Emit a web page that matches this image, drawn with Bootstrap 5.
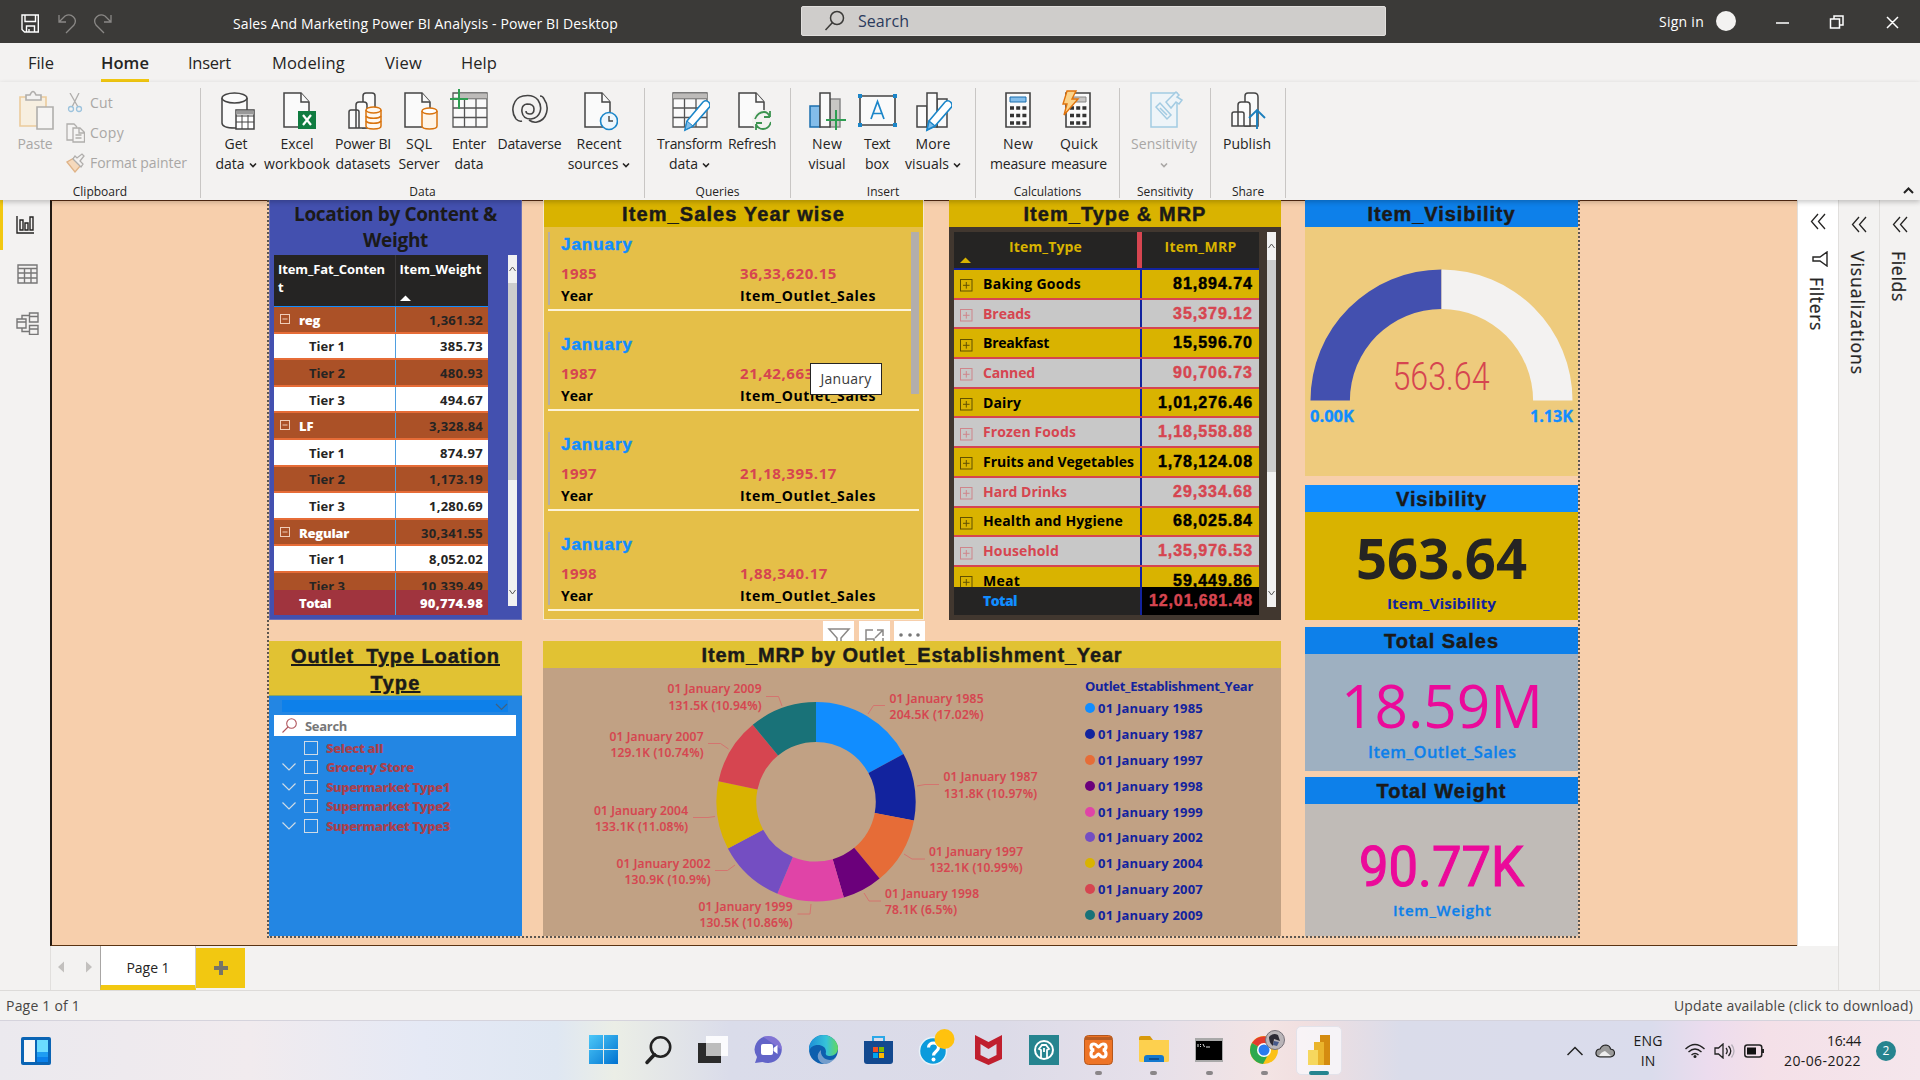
<!DOCTYPE html>
<html lang="en">
<head>
<meta charset="utf-8">
<title>Sales And Marketing Power BI Analysis - Power BI Desktop</title>
<link href="https://cdn.jsdelivr.net/npm/bootstrap@5.3.0/dist/css/bootstrap.min.css" rel="stylesheet">
<style>
html,body{width:1920px;height:1080px;overflow:hidden}
body{font-family:"Open Sans","Noto Sans",sans-serif;font-size:14px;line-height:20px;color:#252423;background:#f3f2f1}
svg{display:block;flex:none}
[data-fit]{display:inline-block;white-space:nowrap}
.arial{font-family:"Liberation Sans",Arial,sans-serif;font-weight:700;-webkit-text-stroke:.45px currentColor}
/* title bar */
.titlebar{height:43px;background:#3b3a38;color:#fff}
.t-left{width:801px;padding:4px 0 0 21px}
.undo{margin-left:19px}
.t-title{margin-left:119px}
.t-search{width:585px;height:30px;margin-top:-1px;background:#cfcdcb;border:1px solid #e0dedc;border-radius:2px;color:#2b3a5c;font-size:16px;padding-left:22px}
.t-right{width:534px;padding-right:21px}
.avatar{width:20px;height:20px;background:#f3f2f1;margin:-1px 40px 0 12px}
/* ribbon */
.tabs{height:39px;font-size:16.5px;padding-left:28px}
.tabs span{height:39px;padding-top:9px;line-height:22px}
.tabs .on{font-weight:600;border-bottom:3px solid #f2c811}
.ribbon{height:118px;padding-top:6px;box-shadow:0 2px 5px rgba(0,0,0,.22);position:relative;z-index:5;background:#f3f2f1}
.grp{height:110px;border-right:1px solid #c8c6c4}
.grp-body{height:93px;padding-left:9px}
.grp-name{height:17px;font-size:12px;line-height:22px;text-align:center}
.rb{flex:none;text-align:center;white-space:nowrap;color:#252423}
.rb svg{margin:0 auto;height:46px}
.rb div{display:block;width:max-content;margin:0 auto;line-height:20px}
.dim,.rb.dim{color:#a9a7a5}
.gc{width:201px}.gd{width:444px}.gq{width:146px}.gi{width:185px}.gm{width:144px}.gs{width:91px}.gp{width:75px}
.w50b{width:50px}.w52b{width:52px}.w54b{width:54px}.w56b{width:56px}.w46b{width:46px}.w62b{width:62px}.w66b{width:66px}.w68b{width:68px}.w70b{width:70px}.w71b{width:71px}
.clip-item{height:30px}
.clip-item svg{margin:0 5px 0 1px}
/* work area */
.workarea{height:790px}
.sidenav{width:50px;height:790px}
.sidenav div{height:49.500px}
.sidenav .on{box-shadow:inset 3px 0 #f2c811}
.canvas-wrap{width:1747px}
.canvas{height:746px;background:#f7cfac;border-left:2px solid #231a12;border-bottom:1px solid #5a3413;border-top:1px solid #5a2d13;padding-left:215px}
.report{width:1313px;height:738px;margin-top:-1px;border:2px dotted #5c5650;border-top:0}
.colA{width:254px}.colM{width:738px;margin-left:21px}.colR{width:273px;margin-left:24px}
.hd{height:27px;font-size:20px;line-height:29px;text-align:center;color:#1b1a19;overflow:hidden;white-space:nowrap;font-weight:700}
.hd-b{background:#0d80ea}.hd-b2{background:#118dff}.hd-y{background:#d9b300}.hd-g{background:#e1c233}
.pane{width:41px;height:790px;border-left:1px solid #e1dfdd}
.vt{writing-mode:vertical-rl;font-size:17.5px;line-height:22px;color:#252423;-webkit-text-stroke:.25px #252423;margin-right:3px}
/* first matrix */
.vA{height:420px;background:#4350af;border:1px solid #6b70b5;border-top:0}
.vA .ttl{height:55px;font-size:19px;line-height:26px;font-weight:700;color:#1b1a19;text-align:center;padding-top:1px}
.m1{width:214px;height:360px;overflow:hidden;margin-left:4px;font-size:13px;font-weight:700}
.m1 .h{height:52px;background:#252423;color:#fff;border-bottom:1px solid #118dff;line-height:18px;padding-top:5px}
.m1 .c1{width:121.5px;border-right:1px solid #4f9fe0;height:100%}
.m1 .h .c1{border-color:#3a3838;margin-top:-5px;padding-top:5px;height:51px}
.m1rows{height:283px;overflow:hidden}
.m1 .r{height:26.6px;background:#fff;border-bottom:2px solid #e66c37}
.m1 .r.o{background:#ab5127}
.m1 .r.g .c1{color:#fff;font-weight:800}
.m1 .r .c1{padding-left:35px}
.m1 .r.g .c1{padding-left:6px}
.m1 .r span{padding-top:1px}
.m1 .c2{width:92.5px;padding-right:5px}
.m1 .tot{height:25px;background:#a0343e;color:#fff;font-weight:800}
.m1 .tot .c1{padding-left:25px}
.sortmark{margin-top:17px}
.sbar{width:9px;background:#f1f1f1}
.sbar i{display:block;background:#cdcdcd}
.sb1{margin-left:20px;height:351px}.sb1 i{height:197px}
.sb2{margin-top:5px;height:375px}.sb2 i{height:212px}
/* slicer */
.slicer{height:295px;background:#2386e3;margin-top:21px}
.slicer .sh{height:55px;background:#e1c233;font-size:20px;line-height:27px;text-align:center;color:#1b1a19;border-bottom:1px solid #8ca75e;padding-top:2px}
.slicer .sh span{text-decoration:underline}
.s-drop{height:12px;background:#0d80ea;margin:4px 14px 3px 13px}
.s-search{height:21px;background:#fff;margin:0 6px 2px 5px;font-size:13px;font-weight:700;color:#777;padding-left:8px}
.s-row{height:19.5px;padding-left:13px;font-size:13px;font-weight:800;color:#a8414f}
.s-row i{width:14px;height:14px;border:1px solid #cfdbe6;margin:0 8px}
/* multi-row card */
.vB{width:381px;height:420px;background:#e5bf48;border:1px solid #f5e9d0;border-top:0;margin-right:25px}
.mcs{width:367px}
.mc{height:100px;margin-left:4px}
.mc-in{height:73px;border-left:2px solid #b3aeab;margin-top:5px;padding:3px 0 0 11px}
.mc .mn{font-size:17px;line-height:20px;color:#118dff}
.mc .vals{font-size:15px;color:#d64550;font-weight:700;line-height:20px;margin-top:8px}
.mc .labs{font-size:14px;color:#000;font-weight:700;line-height:20px;margin-top:3px}
.mc .k{width:179px}
.mc-line{height:2px;background:#fdf3d8;margin:4px -8px 0 0}
.mc:first-child .mc-line{margin-right:0}
.mc + .mc{padding-top:0}
.mc-bar{width:8px;height:162px;background:#b3aeab;margin-top:5px}
.tip{left:810px;top:363px;width:72px;height:32px;background:#fff;border:1px solid #252423;z-index:9;line-height:30px;text-align:center;color:#3a3a3a;font-size:14px}
/* second matrix */
.vC{width:332px;height:420px;background:#41372f}
.m2{width:305px;height:383px;margin:5px 8px 0 5px}
.m2 .h{height:38px;background:#252423;border-bottom:2px solid #12239e;color:#d9b300;font-weight:700;font-size:14px}
.m2 .h span{padding-top:5px}
.m2 .c1{width:188px;border-right:2px solid #12239e}
.m2 .h .c1{border-right:5px solid #d64550;width:188px;height:36px}
.m2rows{height:317px;overflow:hidden}
.m2 .r{height:29.7px;background:#d9b300;border-bottom:2px solid #d64550;color:#000}
.m2 .r.e{background:#c8c8c8;color:#d64550}
.m2 .r .c1{height:100%;padding-left:6px;font-size:14px;font-weight:700}
.m2 .c2{width:117px;padding-right:6px;font-size:16px}
.m2 .h .c2{padding-right:0;font-size:14px}
.m2 .r svg{margin:4px 10px 0 0;opacity:.55}
.m2 .r.e svg{opacity:.5}
.m2 .tri{left:6px;bottom:5px}
.m2 .tot{height:28px;background:#252423;color:#d64550}
.m2 .tot .c1{padding-left:29px;color:#118dff;font-weight:800}
.m2 .tot .c2{background:#000;height:100%}
.acts{right:356px;top:421px;height:20px;gap:4.5px;overflow:hidden}
.acts span{width:31px;height:32px;background:#fff}
.acts svg{margin-top:-1px}
/* donut */
.vD{height:295px;background:#c1a184;margin-top:21px}
.legend-l{padding-top:9px;font-size:13px;font-weight:700;color:#12239e}
.legend-l .lt{height:18px;line-height:18px}
.legend-l .li{height:25.9px}
.legend-l .li i{width:10px;height:10px;border-radius:50%;margin:0 3px 0 0;flex:none}
/* status + taskbar */
.pages{height:44px;border-left:1px solid #e1dfdd}
.ptab{width:96px;height:44px;background:#fff;border-left:1px solid #a8a6a4;border-right:1px solid #d0cecc;border-bottom:5px solid #f2c811}
.padd{width:49px;height:40px;background:#f2c811;margin-top:2px}
.status{height:30px;border-top:1px solid #dddbd9;padding:0 7px 0 6px;color:#484644}
.taskbar{height:60px;border-top:1px solid #d5d3dc;background:linear-gradient(90deg,#ebe9ee 0,#f1ebee 13%,#e5e9f5 22%,#dfe7f2 29%,#ebeee6 32%,#dadcea 38%,#dcdbe8 52%,#e6e0ea 60%,#f3e4e4 66%,#f1dfe0 68%,#dadcea 73%,#dadcec 86%,#ecdcee 89%,#f4e0e8 92%,#f5e6ec 100%)}
.tb-l{width:575.5px;padding-left:21px}
.tb-i{width:55.1px;height:59px;position:relative}
.tb-i svg{overflow:visible;position:relative;top:-1px}
.tb-i.run:after{content:"";position:absolute;left:24px;top:50px;width:7px;height:4px;border-radius:2px;background:#8a8688}
.tb-i.act:before{content:"";position:absolute;left:4px;top:5px;width:46px;height:49px;border-radius:5px;background:rgba(250,250,253,.75);border:1px solid #e3e2ea}
.tb-i.act:after{content:"";position:absolute;left:17px;top:50px;width:20px;height:4px;border-radius:2px;background:#26848f}
.tray{font-size:14px;color:#1b1a19;padding-right:24px}
.lang{width:34px;margin-left:16px}
.clock{width:80px;margin-left:16px;margin-right:15px}
.g8{margin-left:8px}.g12{margin-left:12px}.g19{margin-left:19px}
.bdg{width:20px;height:20px;border-radius:50%;background:#26848f;color:#fff;font-size:12px}
</style>
<script src="https://cdn.jsdelivr.net/npm/bootstrap@5.3.0/dist/js/bootstrap.bundle.min.js"></script>
</head>
<body>
<svg width="0" height="0" class="position-absolute"><defs>
<g id="chev2" fill="none" stroke="#252423" stroke-width="1.3"><path d="M8 1 1.500 8.500 8 16M15 1 8.500 8.500 15 16"/></g>
<g id="plus"><rect x=".5" y=".5" width="11.500" height="11.500" fill="none" stroke="currentColor"/><path d="M3 6.300h6.600M6.300 3v6.600" stroke="currentColor"/></g>
<g id="minus" fill="none" stroke="#f0cdb8"><rect x=".5" y=".5" width="9" height="9"/><path d="M2.500 5h5"/></g>
<g id="down"><path d="M1 1.500l3 3 3-3" fill="none" stroke="currentColor" stroke-width="1.600"/></g>
<g id="page" fill="#fafafa" stroke="#444" stroke-width="1.500"><path d="M1 1h17l8 9v25H1z"/><path d="M18 1v9h8"/></g>
<g id="grid" fill="#fafafa" stroke="#555" stroke-width="1.300"><path d="M1 1h34v34H1z"/><path d="M1 6.500h34M1 16h34M1 25.500h34M12.500 6.500V35M24 6.500V35"/></g>
<g id="pencil"><path d="M15 26 31 7q3-2.500 5.500 0t1 5L21 31l-8 4z" fill="#fff" stroke="#1b86c9" stroke-width="1.600" transform="translate(0 3)"/><path d="M15 29l6 5-8 4z" fill="#7fbdea" stroke="#1b86c9"/></g>
</defs></svg>

<header class="titlebar d-flex align-items-center">
 <div class="t-left d-flex align-items-center">
  <svg width="18" height="19" fill="none" stroke="#fff" stroke-width="1.400"><path d="M1 1h16.300v17H3.500L1 15.500zM4 1v6.500h10.500V1M5.500 18v-6h8v6M8 15v3"/></svg>
  <svg class="undo" width="18" height="20" fill="none" stroke="#8a8886" stroke-width="1.300"><path d="M1 1v7h7M1 8 7 2q5-2.500 8.500 1t.5 8L8 19"/></svg>
  <svg class="ms-3" width="22" height="20" fill="none" stroke="#8a8886" stroke-width="1.300"><path d="M19 1v7h-7M19 8 13 2q-5-2.500-8.500 1t-.5 8l8 8"/></svg>
  <span class="t-title" data-fit="385">Sales And Marketing Power BI Analysis - Power BI Desktop</span>
 </div>
 <div class="t-search d-flex align-items-center"><svg width="22" height="22" fill="none" stroke="#3b3a38" stroke-width="1.500"><circle cx="13" cy="8" r="6.500"/><path d="M8.500 12.500 1.500 20"/></svg><span class="ps-2 ms-1" data-fit="59">Search</span></div>
 <div class="t-right d-flex align-items-center justify-content-end"><span data-fit="45">Sign in</span><span class="avatar rounded-circle"></span>
  <svg width="123" height="14" fill="none" stroke="#fff" stroke-width="1.500"><path d="M0 8h13M54.500 4h9v9h-9zM58 4V1h9v9h-3.500M111 2l11 11M122 2l-11 11"/></svg></div>
</header>

<nav class="tabs d-flex"><span data-fit="26">File</span><span class="on" style="margin-left:47px" data-fit="48">Home</span><span style="margin-left:39px" data-fit="43">Insert</span><span style="margin-left:41px" data-fit="73">Modeling</span><span style="margin-left:40px" data-fit="37">View</span><span style="margin-left:39px" data-fit="36">Help</span></nav>

<section class="ribbon d-flex">
 <div class="grp gc"><div class="grp-body d-flex dim">
   <div class="rb w52b dim"><svg width="38" height="46" viewBox="-2 0 38 46" stroke-width="1.600"><path d="M2 9h26v29H2z" fill="#f7efe0" stroke="#eccb9c"/><path d="M8 12V7h4q3-7 6 0h5v5z" fill="#f3f2f1" stroke="#b0aeac"/><path d="M19 19h16v22H19z" fill="#f5f4f3" stroke="#b0aeac"/></svg><div data-fit="35">Paste</div></div>
   <div class="ps-1">
    <div class="clip-item d-flex align-items-center"><svg width="19" height="20" fill="none" stroke="#b0aeac" stroke-width="1.300"><path d="M4 0l8 14M13 0 6 14"/><circle cx="5" cy="16" r="2.500" stroke="#9cc3dd"/><circle cx="13" cy="16" r="2.500" stroke="#9cc3dd"/></svg><span data-fit="23">Cut</span></div>
    <div class="clip-item d-flex align-items-center"><svg width="19" height="20" fill="#f5f4f3" stroke="#b0aeac" stroke-width="1.300"><path d="M7 17H1V1h7l3 3M7 5h7l4.500 4.500V19H7zM13 5v5h5M9.500 12h6M9.500 15h6"/></svg><span data-fit="34">Copy</span></div>
    <div class="clip-item d-flex align-items-center"><svg width="19" height="20" stroke-width="1.300"><path d="M1 9l8 10 6-7-7-7z" fill="#f5d9bc" stroke="#dfb387"/><path d="M7 6l8 8 2-3-3-3 4-5-2-2-5 4-2-2z" fill="#f3f2f1" stroke="#b0aeac"/></svg><span data-fit="97">Format painter</span></div>
   </div></div><div class="grp-name">Clipboard</div></div>

 <div class="grp gd"><div class="grp-body d-flex">
   <div class="rb w52b"><svg width="38" height="46" viewBox="-4 -4 38 46"><path d="M1 6v25c0 3 5 5 13 5s12-2 12-5V6" fill="#fafafa" stroke="#444" stroke-width="1.500"/><ellipse cx="13.500" cy="6" rx="12.500" ry="5" fill="#fafafa" stroke="#444" stroke-width="1.500"/><path d="M15 18h18v19H15z" fill="#fff" stroke="#444" stroke-width="1.500"/><path d="M15 20.500h18" stroke="#999" stroke-width="4"/><path d="M15 24h18M15 30h18M21 23v14M27 23v14" stroke="#444"/></svg><div data-fit="23">Get</div><div>data<svg class="d-inline ms-1" style="height:6px" width="8"><use href="#down"/></svg></div></div>
   <div class="rb w70b"><svg width="38" height="46" viewBox="-5 -4 38 46"><use href="#page"/><path d="M15 19h18v18H15z" fill="#107c41"/><path d="M20 23l8 10M28 23l-8 10" stroke="#fff" stroke-width="2.200"/></svg><div data-fit="33">Excel</div><div data-fit="66">workbook</div></div>
   <div class="rb w62b"><svg width="38" height="46" viewBox="-4 -4 38 46" fill="#fafafa" stroke="#444" stroke-width="1.500"><path d="M15 36V4q0-3 3-3h6q3 0 3 3v30z"/><path d="M8 36V13q0-3 3-3h5q3 0 3 3v23zM1 36V20q0-2 2-2h6q2 0 2 2v16z"/><g fill="#fff8ef" stroke="#d9730d"><path d="M18 18v16c0 4 15 4 15 0V18"/><ellipse cx="25.500" cy="18" rx="7.500" ry="3"/><path d="M18 24c2 3 13 3 15 0M18 29c2 3 13 3 15 0" fill="none"/></g></svg><div data-fit="56">Power BI</div><div data-fit="55">datasets</div></div>
   <div class="rb w50b"><svg width="38" height="46" viewBox="-4 -4 38 46"><use href="#page"/><path d="M18 19v15c0 4 15 4 15 0V19" fill="#fff4e6" stroke="#d9730d" stroke-width="1.500"/><ellipse cx="25.500" cy="19" rx="7.500" ry="3" fill="#fff" stroke="#d9730d" stroke-width="1.500"/></svg><div data-fit="26">SQL</div><div data-fit="41">Server</div></div>
   <div class="rb w50b"><svg width="40" height="46" viewBox="-3 -4 40 46"><use href="#grid"/><path d="M8 4h27" stroke="#bdbbb9" stroke-width="5"/><path d="M7-3v20M-2 7h18" stroke="#2e9e52" stroke-width="2"/></svg><div data-fit="34">Enter</div><div data-fit="29">data</div></div>
   <div class="rb w71b"><svg width="38" height="46" viewBox="0 1 38 46" fill="none" stroke="#444" stroke-width="1.600"><path d="M5 32C-1 24 2 11 12 9q10-2 15 4 4 6 2 12t-9 7q-8 0-9-7t5-8q7 0 7 5t-4 5-4-3"/><path d="M33 12c6 8 3 21-7 23q-4 1-8-2M29 9q3 0 4 3M5 32q3 3 6 2"/></svg><div data-fit="64">Dataverse</div></div>
   <div class="rb w68b"><svg width="38" height="46" viewBox="-4 -4 38 46"><use href="#page"/><circle cx="25" cy="29" r="8.500" fill="#eef7fd" stroke="#1b86c9" stroke-width="1.600"/><path d="M25 24v5h4" fill="none" stroke="#444" stroke-width="1.400"/></svg><div data-fit="45">Recent</div><div>sources<svg class="d-inline ms-1" style="height:6px" width="8"><use href="#down"/></svg></div></div>
  </div><div class="grp-name">Data</div></div>

 <div class="grp gq"><div class="grp-body d-flex">
   <div class="rb w71b"><svg width="40" height="46" viewBox="-2 -4 40 46"><use href="#grid"/><path d="M1 4h34" stroke="#bdbbb9" stroke-width="5"/><use href="#pencil"/></svg><div data-fit="65">Transform</div><div>data<svg class="d-inline ms-1" style="height:6px" width="8"><use href="#down"/></svg></div></div>
   <div class="rb w54b"><svg width="38" height="46" viewBox="-5 -4 38 46"><use href="#page"/><circle cx="25" cy="29" r="11" fill="#f3f2f1"/><path d="M17 27q3-7 9-7 4 0 6 5v-6M32 25h-6M33 30q-2 7-8 7-5 0-7-5v6M18 31h6" fill="none" stroke="#3c9350" stroke-width="1.800"/></svg><div data-fit="48">Refresh</div></div>
  </div><div class="grp-name">Queries</div></div>

 <div class="grp gi"><div class="grp-body d-flex">
   <div class="rb w54b"><svg width="38" height="46" viewBox="0 -4 38 46" stroke="#444" stroke-width="1.500"><path d="M22 7h10v28H22z" fill="#c8c6c4" stroke="#888"/><path d="M2 14h10v21H2z" fill="#83bdea" stroke="#1b6fae"/><path d="M12 1h10v34H12z" fill="#fafafa"/><path d="M28 18v20M18 28h20" stroke="#2e9e52" stroke-width="2"/></svg><div data-fit="30">New</div><div data-fit="37">visual</div></div>
   <div class="rb w46b"><svg width="40" height="46" viewBox="-1 -4 40 46"><path d="M2 4h35v29H2z" fill="#fafafa" stroke="#444" stroke-width="1.600"/><path d="M0 2h4v4H0zM35 2h4v4h-4zM0 31h4v4H0zM35 31h4v4h-4z" fill="#1b86c9"/><path d="M13 27 19.500 9.500 26 27M15.500 21.500h8" fill="none" stroke="#1b86c9" stroke-width="1.700"/></svg><div data-fit="26">Text</div><div data-fit="24">box</div></div>
   <div class="rb w66b"><svg width="38" height="46" viewBox="-2 -4 38 46" fill="#fafafa" stroke="#444" stroke-width="1.500"><path d="M21 7h10v28H21zM1 14h10v21H1z"/><path d="M11 1h10v34H11z"/><use href="#pencil" x="-2"/></svg><div data-fit="35">More</div><div>visuals<svg class="d-inline ms-1" style="height:6px" width="8"><use href="#down"/></svg></div></div>
  </div><div class="grp-name">Insert</div></div>

 <div class="grp gm"><div class="grp-body d-flex">
   <div class="rb w66b"><svg width="26" height="46" viewBox="0 -4 26 46"><path d="M1 1h24v34H1z" fill="#fafafa" stroke="#444" stroke-width="1.600"/><path d="M5 5h16v5H5z" fill="#83bdea" stroke="#1b6fae"/><path d="M5 16h17M5 23.500h17M5 31h17" stroke="#333" stroke-width="3.500" stroke-dasharray="4 2.200"/></svg><div data-fit="30">New</div><div data-fit="56">measure</div></div>
   <div class="rb w56b"><svg width="34" height="46" viewBox="3 -4 34 46"><path d="M7 1h24v34H7z" fill="#fafafa" stroke="#444" stroke-width="1.600"/><path d="M14 5h13v5H14z" fill="#c8c6c4" stroke="#888"/><path d="M11 16h17M11 23.500h17M11 31h17" stroke="#333" stroke-width="3.500" stroke-dasharray="4 2.200"/><path d="M8-1h9l-4 8h6L5 23l3-11H4z" fill="#fbd38a" stroke="#e0730d" stroke-width="1.400"/></svg><div data-fit="38">Quick</div><div data-fit="56">measure</div></div>
  </div><div class="grp-name">Calculations</div></div>

 <div class="grp gs"><div class="grp-body d-flex">
   <div class="rb w70b dim"><svg width="38" height="46" viewBox="-5 -4 38 46" fill="#eef4f8" stroke="#a3cbe2" stroke-width="1.500"><path d="M1 1h26v34H1z"/><path d="M6 15l4-4 11 12-4 4zM10 16l7 7M16 10 26 0l3 3-2 2 5 3-3 4-3-2-5 6z"/></svg><div data-fit="66">Sensitivity</div><div><svg class="d-inline" style="height:6px" width="8"><use href="#down"/></svg></div></div>
  </div><div class="grp-name">Sensitivity</div></div>

 <div class="grp gp"><div class="grp-body d-flex">
   <div class="rb w54b"><svg width="38" height="46" viewBox="-3 -4 38 46" fill="#fafafa" stroke="#444" stroke-width="1.500"><path d="M14 34V4q0-3 3-3h6q4 0 4 4v29z"/><path d="M7 34V13q0-3 3-3h6q3 0 3 3v21zM1 34V22q0-2 2-2h8q2 0 2 2v12z"/><path d="M26 37V19M18 26l8-8 8 8" fill="none" stroke="#1b7fbd" stroke-width="1.900"/></svg><div data-fit="48">Publish</div></div>
  </div><div class="grp-name">Share</div></div>
 <svg class="ms-auto me-1 mt-auto mb-1" width="15" height="10"><path d="M3 7l4.500-4.500L12 7" fill="none" stroke="#222" stroke-width="2"/></svg>
</section>

<main class="workarea d-flex">
 <aside class="sidenav">
  <div class="on d-flex align-items-center justify-content-center"><svg width="18" height="18" fill="none" stroke="#252423" stroke-width="1.400"><path d="M1 0v17h17M4 4h3v10H4zM9 7h3v7H9zM14 1h3v13h-3z"/></svg></div>
  <div class="d-flex align-items-center justify-content-center ps-1"><svg width="21" height="20" fill="none" stroke="#777" stroke-width="1.400"><path d="M1 1h19v18H1zM1 4.500h19M1 9h19M1 14h19M7.500 4.500V19M14 4.500V19"/></svg></div>
  <div class="d-flex align-items-center justify-content-center ps-1"><svg width="23" height="23" fill="none" stroke="#777" stroke-width="1.400"><path d="M1 7h9v9H1zM1 10h9M13.500 1h8.500v9h-8.500zM13.500 4.500H22M13.500 13.500H22v9h-8.500zM13.500 17H22M6 7V3.500h7.500M6 16v3.500h7.500"/></svg></div>
 </aside>

 <div class="canvas-wrap">
  <div class="canvas">
   <div class="report d-flex">
    <div class="colA">
     <section class="vA">
      <div class="ttl"><span data-fit="203">Location by Content &amp;</span><br><span data-fit="65">Weight</span></div>
      <div class="d-flex">
      <div class="m1">
       <div class="h d-flex"><div class="c1 ps-1"><span data-fit="107">Item_Fat_Conten</span><br><span>t</span></div><div class="c2 ps-1"><span data-fit="82">Item_Weight</span><svg class="sortmark" width="11" height="6"><path d="M0 6l5.500-5.500L11 6z" fill="#fff"/></svg></div></div>
       <div class="m1rows">
        <div class="r o g d-flex align-items-center"><div class="c1 d-flex align-items-center"><svg class="me-2" width="11" height="11"><use href="#minus"/></svg><span data-fit="21">reg</span></div><div class="c2 text-end"><span data-fit="54">1,361.32</span></div></div>
        <div class="r d-flex align-items-center"><div class="c1 d-flex align-items-center"><span data-fit="36">Tier 1</span></div><div class="c2 text-end"><span data-fit="43">385.73</span></div></div>
        <div class="r o d-flex align-items-center"><div class="c1 d-flex align-items-center"><span data-fit="36">Tier 2</span></div><div class="c2 text-end"><span data-fit="43">480.93</span></div></div>
        <div class="r d-flex align-items-center"><div class="c1 d-flex align-items-center"><span data-fit="36">Tier 3</span></div><div class="c2 text-end"><span data-fit="43">494.67</span></div></div>
        <div class="r o g d-flex align-items-center"><div class="c1 d-flex align-items-center"><svg class="me-2" width="11" height="11"><use href="#minus"/></svg><span>LF</span></div><div class="c2 text-end"><span data-fit="54">3,328.84</span></div></div>
        <div class="r d-flex align-items-center"><div class="c1 d-flex align-items-center"><span data-fit="36">Tier 1</span></div><div class="c2 text-end"><span data-fit="43">874.97</span></div></div>
        <div class="r o d-flex align-items-center"><div class="c1 d-flex align-items-center"><span data-fit="36">Tier 2</span></div><div class="c2 text-end"><span data-fit="54">1,173.19</span></div></div>
        <div class="r d-flex align-items-center"><div class="c1 d-flex align-items-center"><span data-fit="36">Tier 3</span></div><div class="c2 text-end"><span data-fit="54">1,280.69</span></div></div>
        <div class="r o g d-flex align-items-center"><div class="c1 d-flex align-items-center"><svg class="me-2" width="11" height="11"><use href="#minus"/></svg><span data-fit="50">Regular</span></div><div class="c2 text-end"><span data-fit="62">30,341.55</span></div></div>
        <div class="r d-flex align-items-center"><div class="c1 d-flex align-items-center"><span data-fit="36">Tier 1</span></div><div class="c2 text-end"><span data-fit="54">8,052.02</span></div></div>
        <div class="r o d-flex align-items-center"><div class="c1 d-flex align-items-center"><span data-fit="36">Tier 3</span></div><div class="c2 text-end"><span data-fit="62">10,339.49</span></div></div>
       </div>
       <div class="tot d-flex align-items-center"><div class="c1 d-flex align-items-center"><span data-fit="32">Total</span></div><div class="c2 text-end"><span data-fit="63">90,774.98</span></div></div>
      </div>
      <div class="sbar sb1"><svg width="9" height="28" fill="none" stroke="#555"><path d="M1.500 16l3-4 3 4"/></svg><i></i><svg width="9" height="126" fill="none" stroke="#555"><path d="M1.500 110l3 4 3-4"/></svg></div>
      </div>
     </section>
     <section class="slicer">
      <div class="sh arial"><span data-fit="209">Outlet_Type Loation</span><br><span data-fit="50">Type</span></div>
      <div class="s-drop d-flex justify-content-end"><svg width="13" height="12" fill="none" stroke="#41617f" stroke-width="1.200"><path d="M1 4l5.500 5.500L12 4"/></svg></div>
      <div class="s-search d-flex align-items-center"><svg class="me-2" width="15" height="16" fill="none" stroke="#b0555c" stroke-width="1.100"><circle cx="9.500" cy="5.500" r="4.800"/><path d="M6 9 .5 14.500"/></svg><span data-fit="42">Search</span></div>
      <div class="s-row d-flex align-items-center"><svg width="14" height="8"></svg><i></i><span data-fit="57">Select all</span></div>
      <div class="s-row d-flex align-items-center"><svg width="14" height="8" fill="none" stroke="#cfdbe6" stroke-width="1.200"><path d="M.5.500 7 7 13.500.500"/></svg><i></i><span data-fit="88">Grocery Store</span></div>
      <div class="s-row d-flex align-items-center"><svg width="14" height="8" fill="none" stroke="#cfdbe6" stroke-width="1.200"><path d="M.5.500 7 7 13.500.500"/></svg><i></i><span data-fit="124">Supermarket Type1</span></div>
      <div class="s-row d-flex align-items-center"><svg width="14" height="8" fill="none" stroke="#cfdbe6" stroke-width="1.200"><path d="M.5.500 7 7 13.500.500"/></svg><i></i><span data-fit="124">Supermarket Type2</span></div>
      <div class="s-row d-flex align-items-center"><svg width="14" height="8" fill="none" stroke="#cfdbe6" stroke-width="1.200"><path d="M.5.500 7 7 13.500.500"/></svg><i></i><span data-fit="124">Supermarket Type3</span></div>
     </section>
    </div>

    <div class="colM position-relative">
     <div class="d-flex">
      <section class="vB">
       <div class="hd hd-y arial"><span data-fit="223">Item_Sales Year wise</span></div>
       <div class="d-flex">
       <div class="mcs">
        <div class="mc d-flex flex-column"><div class="mc-in"><div class="mn arial"><span data-fit="72">January</span></div><div class="vals d-flex"><span class="k"><span data-fit="36">1985</span></span><span data-fit="97">36,33,620.15</span></div><div class="labs d-flex"><span class="k"><span data-fit="32">Year</span></span><span data-fit="136">Item_Outlet_Sales</span></div></div><div class="mc-line"></div></div>
        <div class="mc d-flex flex-column"><div class="mc-in"><div class="mn arial"><span data-fit="72">January</span></div><div class="vals d-flex"><span class="k"><span data-fit="36">1987</span></span><span data-fit="97">21,42,663.17</span></div><div class="labs d-flex"><span class="k"><span data-fit="32">Year</span></span><span data-fit="136">Item_Outlet_Sales</span></div></div><div class="mc-line"></div></div>
        <div class="mc d-flex flex-column"><div class="mc-in"><div class="mn arial"><span data-fit="72">January</span></div><div class="vals d-flex"><span class="k"><span data-fit="36">1997</span></span><span data-fit="97">21,18,395.17</span></div><div class="labs d-flex"><span class="k"><span data-fit="32">Year</span></span><span data-fit="136">Item_Outlet_Sales</span></div></div><div class="mc-line"></div></div>
        <div class="mc d-flex flex-column"><div class="mc-in"><div class="mn arial"><span data-fit="72">January</span></div><div class="vals d-flex"><span class="k"><span data-fit="36">1998</span></span><span data-fit="88">1,88,340.17</span></div><div class="labs d-flex"><span class="k"><span data-fit="32">Year</span></span><span data-fit="136">Item_Outlet_Sales</span></div></div><div class="mc-line"></div></div>
       </div>
       <div class="mc-bar"></div>
       </div>
      </section>

      <section class="vC">
       <div class="hd hd-y arial"><span data-fit="183">Item_Type &amp; MRP</span></div>
       <div class="d-flex">
       <div class="m2">
        <div class="h d-flex"><div class="c1 text-center position-relative"><span data-fit="73">Item_Type</span><svg class="position-absolute tri" width="11" height="6"><path d="M0 6l5.500-5.500L11 6z" fill="#d9b300"/></svg></div><div class="c2 text-center"><span data-fit="72">Item_MRP</span></div></div>
        <div class="m2rows">
         <div class="r d-flex align-items-center"><div class="c1 d-flex align-items-center"><svg width="13" height="13"><use href="#plus"/></svg><span data-fit="98">Baking Goods</span></div><div class="c2 arial text-end"><span data-fit="80">81,894.74</span></div></div>
         <div class="r e d-flex align-items-center"><div class="c1 d-flex align-items-center"><svg width="13" height="13"><use href="#plus"/></svg><span data-fit="48">Breads</span></div><div class="c2 arial text-end"><span data-fit="80">35,379.12</span></div></div>
         <div class="r d-flex align-items-center"><div class="c1 d-flex align-items-center"><svg width="13" height="13"><use href="#plus"/></svg><span data-fit="66">Breakfast</span></div><div class="c2 arial text-end"><span data-fit="80">15,596.70</span></div></div>
         <div class="r e d-flex align-items-center"><div class="c1 d-flex align-items-center"><svg width="13" height="13"><use href="#plus"/></svg><span data-fit="52">Canned</span></div><div class="c2 arial text-end"><span data-fit="80">90,706.73</span></div></div>
         <div class="r d-flex align-items-center"><div class="c1 d-flex align-items-center"><svg width="13" height="13"><use href="#plus"/></svg><span data-fit="38">Dairy</span></div><div class="c2 arial text-end"><span data-fit="95">1,01,276.46</span></div></div>
         <div class="r e d-flex align-items-center"><div class="c1 d-flex align-items-center"><svg width="13" height="13"><use href="#plus"/></svg><span data-fit="93">Frozen Foods</span></div><div class="c2 arial text-end"><span data-fit="95">1,18,558.88</span></div></div>
         <div class="r d-flex align-items-center"><div class="c1 d-flex align-items-center"><svg width="13" height="13"><use href="#plus"/></svg><span data-fit="151">Fruits and Vegetables</span></div><div class="c2 arial text-end"><span data-fit="95">1,78,124.08</span></div></div>
         <div class="r e d-flex align-items-center"><div class="c1 d-flex align-items-center"><svg width="13" height="13"><use href="#plus"/></svg><span data-fit="84">Hard Drinks</span></div><div class="c2 arial text-end"><span data-fit="80">29,334.68</span></div></div>
         <div class="r d-flex align-items-center"><div class="c1 d-flex align-items-center"><svg width="13" height="13"><use href="#plus"/></svg><span data-fit="140">Health and Hygiene</span></div><div class="c2 arial text-end"><span data-fit="80">68,025.84</span></div></div>
         <div class="r e d-flex align-items-center"><div class="c1 d-flex align-items-center"><svg width="13" height="13"><use href="#plus"/></svg><span data-fit="76">Household</span></div><div class="c2 arial text-end"><span data-fit="95">1,35,976.53</span></div></div>
         <div class="r d-flex align-items-center"><div class="c1 d-flex align-items-center"><svg width="13" height="13"><use href="#plus"/></svg><span data-fit="37">Meat</span></div><div class="c2 arial text-end"><span data-fit="80">59,449.86</span></div></div>
        </div>
        <div class="tot d-flex align-items-center"><div class="c1 h-100 d-flex align-items-center"><span data-fit="34">Total</span></div><div class="c2 arial d-flex align-items-center justify-content-end"><span data-fit="104">12,01,681.48</span></div></div>
       </div>
       <div class="sbar sb2"><svg width="9" height="28" fill="none" stroke="#555"><path d="M1.500 16l3-4 3 4"/></svg><i></i><svg width="9" height="135" fill="none" stroke="#555"><path d="M1.500 119l3 4 3-4"/></svg></div>
       </div>
      </section>
     </div>
     <div class="acts position-absolute d-flex">
      <span><svg width="31" height="32" fill="none" stroke="#8a8886" stroke-width="1.500"><path d="M6 9h20l-8 9v8h-4v-8z"/></svg></span>
      <span><svg width="31" height="32" fill="none" stroke="#8a8886" stroke-width="1.500"><path d="M14 10H7v16h17v-8M18 10h6v6M24 10l-8 8M7 19h8v7"/></svg></span>
      <span><svg width="31" height="32" fill="#777"><circle cx="7" cy="15" r="1.800"/><circle cx="16" cy="15" r="1.800"/><circle cx="24" cy="15" r="1.800"/></svg></span>
     </div>
     <section class="vD">
      <div class="hd hd-g arial"><span data-fit="421">Item_MRP by Outlet_Establishment_Year</span></div>
      <div class="d-flex">
       <svg width="542" height="268" viewBox="543 668 542 268">
        <g fill="none" stroke-width="39.900" transform="rotate(-90 816 801.800)">
         <circle cx="816" cy="801.800" r="79.750" pathLength="100" stroke="#118dff" stroke-dasharray="17.020 82.980"/>
         <circle cx="816" cy="801.800" r="79.750" pathLength="100" stroke="#12239e" stroke-dasharray="10.970 89.030" stroke-dashoffset="-17.020"/>
         <circle cx="816" cy="801.800" r="79.750" pathLength="100" stroke="#e66c37" stroke-dasharray="10.990 89.010" stroke-dashoffset="-27.990"/>
         <circle cx="816" cy="801.800" r="79.750" pathLength="100" stroke="#6b007b" stroke-dasharray="6.500 93.500" stroke-dashoffset="-38.980"/>
         <circle cx="816" cy="801.800" r="79.750" pathLength="100" stroke="#e044a7" stroke-dasharray="10.860 89.140" stroke-dashoffset="-45.480"/>
         <circle cx="816" cy="801.800" r="79.750" pathLength="100" stroke="#744ec2" stroke-dasharray="10.900 89.100" stroke-dashoffset="-56.340"/>
         <circle cx="816" cy="801.800" r="79.750" pathLength="100" stroke="#d9b300" stroke-dasharray="11.080 88.920" stroke-dashoffset="-67.240"/>
         <circle cx="816" cy="801.800" r="79.750" pathLength="100" stroke="#d64550" stroke-dasharray="10.740 89.260" stroke-dashoffset="-78.320"/>
         <circle cx="816" cy="801.800" r="79.750" pathLength="100" stroke="#197278" stroke-dasharray="10.940 89.060" stroke-dashoffset="-89.060"/>
        </g>
        <g fill="none" stroke="#d4746f"><path d="M868 714l5.500-8.500H885M917 786l8-1.500h14M904 854l8 5h13M864 893l5 8h12M811 904l-1 10h-12.500M735 865l-7.500 5.500H715M715 816.500l-7 1h-15M728.500 749l-8-5.500H708M782 706l-3.500-9.500H766"/></g>
        <g font-size="12" font-weight="600" fill="#d64550" stroke="#d64550" stroke-width=".15">
         <text x="889.500" y="703" textLength="94">01 January 1985</text><text x="889.500" y="719" textLength="94">204.5K (17.02%)</text>
         <text x="943.500" y="781" textLength="94">01 January 1987</text><text x="944" y="797.500" textLength="93">131.8K (10.97%)</text>
         <text x="929" y="856" textLength="94">01 January 1997</text><text x="929.500" y="872" textLength="93">132.1K (10.99%)</text>
         <text x="885" y="898" textLength="94">01 January 1998</text><text x="885" y="914" textLength="72">78.1K (6.5%)</text>
         <text x="698.500" y="911" textLength="94">01 January 1999</text><text x="699.500" y="927" textLength="93">130.5K (10.86%)</text>
         <text x="616.500" y="868" textLength="94">01 January 2002</text><text x="624.500" y="884" textLength="86">130.9K (10.9%)</text>
         <text x="594" y="815" textLength="94">01 January 2004</text><text x="595" y="831" textLength="93">133.1K (11.08%)</text>
         <text x="609.500" y="741" textLength="94">01 January 2007</text><text x="610.500" y="757" textLength="93">129.1K (10.74%)</text>
         <text x="667.500" y="693" textLength="94">01 January 2009</text><text x="668.500" y="710" textLength="93">131.5K (10.94%)</text>
        </g>
       </svg>
       <div class="legend-l">
        <div class="lt"><span data-fit="168">Outlet_Establishment_Year</span></div>
        <div class="li d-flex align-items-center"><i style="background:#118dff"></i><span data-fit="105">01 January 1985</span></div>
        <div class="li d-flex align-items-center"><i style="background:#12239e"></i><span data-fit="105">01 January 1987</span></div>
        <div class="li d-flex align-items-center"><i style="background:#e66c37"></i><span data-fit="105">01 January 1997</span></div>
        <div class="li d-flex align-items-center"><i style="background:#6b007b"></i><span data-fit="105">01 January 1998</span></div>
        <div class="li d-flex align-items-center"><i style="background:#e044a7"></i><span data-fit="105">01 January 1999</span></div>
        <div class="li d-flex align-items-center"><i style="background:#744ec2"></i><span data-fit="105">01 January 2002</span></div>
        <div class="li d-flex align-items-center"><i style="background:#d9b300"></i><span data-fit="105">01 January 2004</span></div>
        <div class="li d-flex align-items-center"><i style="background:#d64550"></i><span data-fit="105">01 January 2007</span></div>
        <div class="li d-flex align-items-center"><i style="background:#197278"></i><span data-fit="105">01 January 2009</span></div>
       </div>
      </div>
     </section>
    </div>

    <div class="colR">
     <section class="mb-0"><div class="hd hd-b arial"><span data-fit="148">Item_Visibility</span></div>
      <svg width="273" height="249" viewBox="1305 227 273 249"><path d="M1305 227h273v249h-273z" fill="#eecb7d"/>
       <path d="M1310.500 400.600a131 131 0 0 1 131-131v39.400a91.600 91.600 0 0 0-91.600 91.600z" fill="#4350af"/><path d="M1572.500 400.600a131 131 0 0 0-131-131v39.400a91.600 91.600 0 0 1 91.600 91.600z" fill="#f3f2f1"/>
       <text x="1392.500" y="390" font-family="Roboto" font-weight="300" font-size="39" fill="#d64550" textLength="97" lengthAdjust="spacingAndGlyphs">563.64</text>
       <g font-size="16" font-weight="700" fill="#118dff" stroke="#118dff" stroke-width=".3"><text x="1310" y="422.300" textLength="44" lengthAdjust="spacingAndGlyphs">0.00K</text><text x="1530" y="422.300" textLength="43" lengthAdjust="spacingAndGlyphs">1.13K</text></g></svg>
     </section>
     <section style="margin-top:9px"><div class="hd hd-b2 arial"><span data-fit="91">Visibility</span></div>
      <svg width="273" height="108" viewBox="1305 512 273 108"><path d="M1305 512h273v108h-273z" fill="#d9b300"/><text x="1356" y="578.500" font-size="56" font-weight="700" fill="#252423" textLength="171" lengthAdjust="spacingAndGlyphs">563.64</text><text x="1387" y="608.500" font-size="15" font-weight="700" fill="#12239e" textLength="109" lengthAdjust="spacingAndGlyphs">Item_Visibility</text></svg>
     </section>
     <section style="margin-top:7px"><div class="hd hd-b arial"><span data-fit="115">Total Sales</span></div>
      <svg width="273" height="117" viewBox="1305 654 273 117"><path d="M1305 654h273v117h-273z" fill="#9eb0c1"/><text x="1341" y="728" font-size="60.500" fill="#eb0a9a" textLength="202" lengthAdjust="spacingAndGlyphs">18.59M</text><text x="1368" y="758" font-size="16.500" font-weight="600" fill="#0d80ea" stroke="#0d80ea" stroke-width=".3" textLength="148">Item_Outlet_Sales</text></svg>
     </section>
     <section style="margin-top:6px"><div class="hd hd-b arial"><span data-fit="130">Total Weight</span></div>
      <svg width="273" height="132" viewBox="1305 804 273 132"><path d="M1305 804h273v132h-273z" fill="#c0bbb7"/><text x="1359" y="885.700" font-family="Roboto" font-size="55" fill="#eb0a9a" stroke="#eb0a9a" stroke-width="1.100" textLength="165" lengthAdjust="spacingAndGlyphs">90.77K</text><text x="1393" y="915.700" font-size="15" font-weight="600" fill="#0d80ea" stroke="#0d80ea" stroke-width=".3" textLength="98">Item_Weight</text></svg>
     </section>
    </div>
   </div>
  </div>
  <div class="pages d-flex">
   <svg width="49" height="44" fill="#c2c0be"><path d="M13 15.500v11l-6-5.500zM35 15.500v11l6-5.500z"/></svg>
   <div class="ptab d-flex align-items-center justify-content-center pt-1"><span data-fit="43">Page 1</span></div>
   <div class="padd d-flex align-items-center justify-content-center"><svg width="14" height="14"><path d="M7 0v14M0 7h14" stroke="#777467" stroke-width="4"/></svg></div>
  </div>
 </div>
 <aside class="d-flex">
  <div class="pane d-flex flex-column align-items-center bg-white" style="height:746px;padding-top:13px"><svg width="16" height="17"><use href="#chev2"/></svg><svg style="margin-top:21px" class="ms-1" width="16" height="16" fill="none" stroke="#252423" stroke-width="1.400"><path d="M15 1v14L8 10H1V6h7z"/></svg><span class="vt" style="margin-top:10px" data-fit="54">Filters</span></div>
  <div class="pane d-flex flex-column align-items-center" style="padding-top:16px"><svg width="16" height="17"><use href="#chev2"/></svg><span class="vt" style="margin-top:18px" data-fit="124">Visualizations</span></div>
  <div class="pane d-flex flex-column align-items-center" style="padding-top:16px"><svg width="16" height="17"><use href="#chev2"/></svg><span class="vt" style="margin-top:18px" data-fit="51">Fields</span></div>
 </aside>
</main>
<div class="tip position-absolute"><span data-fit="51">January</span></div>

<footer>
 <div class="status d-flex align-items-center justify-content-between"><span data-fit="74">Page 1 of 1</span><span data-fit="239">Update available (click to download)</span></div>
 <div class="taskbar d-flex align-items-center">
  <div class="tb-l"><svg width="30" height="28"><rect width="30" height="28" rx="2" fill="#0a64b4"/><path d="M3 3h11v22H3z" fill="#f7f7f7"/><path d="M16 3h11v12H16z" fill="#6bdcff"/><path d="M16 15h11v5H16z" fill="#1e9df2"/><path d="M16 20h11v5H16z" fill="#0a80ea"/></svg></div>
  <div class="d-flex">
   <div class="tb-i d-flex align-items-center justify-content-center"><svg width="29" height="29"><defs><linearGradient id="w" x2="1" y2="1"><stop stop-color="#4cc8f8"/><stop offset="1" stop-color="#0072d0"/></linearGradient></defs><path d="M0 0h14v14H0zM15 0h14v14H15zM0 15h14v14H0zM15 15h14v14H15z" fill="url(#w)"/></svg></div>
   <div class="tb-i d-flex align-items-center justify-content-center"><svg width="27" height="28" fill="none" stroke="#222" stroke-width="2.600"><circle cx="15.500" cy="11" r="9.700"/><path d="M9.500 18.500 2 26.500" stroke-width="3.500" stroke-linecap="round"/></svg></div>
   <div class="tb-i d-flex align-items-center justify-content-center"><svg width="30" height="28"><path d="M0 7h23v20H0z" fill="#2b2b2b"/><path d="M8 0h22v20H8z" fill="#fff" opacity=".88"/><path d="M8 7h15v13H8z" fill="#bdbdbd"/></svg></div>
   <div class="tb-i d-flex align-items-center justify-content-center"><svg width="29" height="29"><path d="M14.500 1a14 13.500 0 1 1-6 26L1 28l2-6A14 13.500 0 0 1 14.500 1z" fill="#6264c8"/><path d="M9 1.800A14 13.500 0 0 1 28 15z" fill="#8f7bd8" opacity=".7"/><rect x="7" y="9" width="12" height="11" rx="2" fill="#fff"/><path d="M19.500 13l4-3v9l-4-3z" fill="#fff"/></svg></div>
   <div class="tb-i d-flex align-items-center justify-content-center"><svg width="31" height="31"><defs><linearGradient id="e" x2="1"><stop stop-color="#1d8fd8"/><stop offset=".6" stop-color="#36c3d9"/><stop offset="1" stop-color="#63d85c"/></linearGradient></defs><circle cx="15.500" cy="15.500" r="14.500" fill="#0d5fae"/><path d="M1 14C2 5 9 1 15.500 1 24 1 30 8 30 14c0 5-4 8-8 8-3 0-5-1-4-4 0-5-4-7-8-7-5 0-8 2-9 7z" fill="url(#e)"/><path d="M13 16c-1 6 4 10 9 10 3 0 4-1 6-3-2 4-7 7-12 7-6-2-9-9-3-14z" fill="#dadcea" opacity=".5"/></svg></div>
   <div class="tb-i d-flex align-items-center justify-content-center"><svg width="29" height="30"><path d="M9 6V2h11v4" fill="none" stroke="#2ba8e8" stroke-width="2"/><path d="M0 6h29v20q0 3-3 3H3q-3 0-3-3z" fill="#13498f"/><path d="M9 12h5v5H9z" fill="#f25022"/><path d="M15 12h5v5h-5z" fill="#7fba00"/><path d="M9 18h5v5H9z" fill="#00a4ef"/><path d="M15 18h5v5h-5z" fill="#ffb900"/></svg></div>
   <div class="tb-i d-flex align-items-center justify-content-center"><svg width="30" height="30"><circle cx="14" cy="16" r="13.500" fill="#0c9bdc" stroke="#e8f2f8" stroke-width="1.500"/><path d="M9.500 12.500c0-6 10-6 10 0 0 4-5 4-5 8" fill="none" stroke="#fff" stroke-width="3.200"/><circle cx="14.500" cy="24.500" r="2" fill="#fff"/><circle cx="25.500" cy="4" r="10" fill="#ffc20e"/></svg></div>
   <div class="tb-i d-flex align-items-center justify-content-center"><svg width="27" height="30"><path d="M0 0l13.500 7L27 0v24l-13.500 6L0 24zM5.500 9v11l8 4 8-4V9l-8 5z" fill="#c01f2e" fill-rule="evenodd"/></svg></div>
   <div class="tb-i d-flex align-items-center justify-content-center"><svg width="30" height="30"><path d="M0 0h30v30H0z" fill="#26848f"/><circle cx="15" cy="15" r="9" fill="none" stroke="#fff" stroke-width="2"/><path d="M12 23v-8l-2-1 3-4h4l3 4-2 1v8M15 13v4" fill="none" stroke="#fff" stroke-width="1.800"/></svg></div>
   <div class="tb-i run d-flex align-items-center justify-content-center"><svg width="29" height="30"><rect x=".5" y=".5" width="28" height="29" rx="4" fill="#ee7426" stroke="#b5571c"/><path d="M1 2h27v3H1z" fill="#b95d22"/><path d="M10 9c-4 0-4 5 0 6-4 1-4 7 0 7 3 0 3-3 4.500-3S16 22 19 22c4 0 4-6 0-7 4-1 4-6 0-6-3 0-3 3-4.500 3S13 9 10 9z" fill="none" stroke="#fff" stroke-width="3.200"/></svg></div>
   <div class="tb-i run d-flex align-items-center justify-content-center"><svg width="30" height="27"><path d="M0 2q0-2 2-2h9l3 4H0z" fill="#d99a0c"/><path d="M0 4h30v21q0 1-2 1H2q-2 0-2-1z" fill="#fdd04e"/><path d="M5 26v-4q0-3 3-3h14q3 0 3 3v4z" fill="#1479cf"/><path d="M10 23h10" stroke="#0a4f94" stroke-width="2"/></svg></div>
   <div class="tb-i run d-flex align-items-center justify-content-center"><svg width="28" height="24"><path d="M0 0h28v24H0z" fill="#a9a9a9"/><path d="M1 3h26v19H1z" fill="#000"/><path d="M3 6v3M5 6.500h1M5 8.500h1M8 6l1.500 3M11 9h4" stroke="#ddd"/></svg></div>
   <div class="tb-i run d-flex align-items-center justify-content-center"><svg width="28" height="28"><circle cx="14" cy="14" r="14" fill="#fbc116"/><path d="M14 14 1.900 7A14 14 0 0 1 26 7z" fill="#e33b2e"/><path d="M14 14 1.900 7A14 14 0 0 0 13 28l6-11z" fill="#2da94f"/><circle cx="14" cy="14" r="7" fill="#fff"/><circle cx="14" cy="14" r="5.500" fill="#2b7bf0"/><circle cx="25" cy="4" r="9.500" fill="#b9b4b8" stroke="#77727a"/><path d="M19 1q4-5 9-2l2 6-6-2-1 7q-4-3-4-9z" fill="#2c2a35"/><path d="M24 5l5 1-2 4-4-1z" fill="#46598a"/></svg></div>
   <div class="tb-i run act d-flex align-items-center justify-content-center"><svg width="24" height="30"><path d="M13 0h10v30H13z" fill="#d48b10"/><path d="M7 7h10v23H7z" fill="#eab42c"/><path d="M1 15h10v15H1z" fill="#f6d75e"/></svg></div>
  </div>
  <div class="tray d-flex align-items-center ms-auto">
   <svg width="16" height="10" fill="none" stroke="#222" stroke-width="1.500"><path d="M.5 9 8 1.500 15.500 9"/></svg>
   <svg class="g12" width="20" height="14"><path d="M5 13q-4.500-.5-4-4.500Q1.500 5 5 5q2-4 6-4 4 .5 4.500 4 4 .5 4 4t-4 4z" fill="#9a9a9a" stroke="#222" stroke-width="1.200"/><path d="M4 12q2-4 6-5l6 5z" fill="#eee"/></svg>
   <div class="lang text-center"><span data-fit="29">ENG</span><br>IN</div>
   <svg class="g19" width="22" height="16" fill="none" stroke="#222" stroke-width="1.400"><path d="M1.500 6q9.500-9 19 0M4.500 9q6.500-6 13 0M7.500 12q3.500-3 7 0"/><circle cx="11" cy="13.500" r="1.500" fill="#222" stroke="none"/></svg>
   <svg class="g8" width="22" height="16" fill="none" stroke="#222" stroke-width="1.300"><path d="M1 5h3.500L9 1v14l-4.500-4H1zM12 5q2.500 3 0 6M14.500 3q4.500 5 0 10"/><path d="M17.500 1.500q5 6.500 0 13" stroke="#b5afb8"/></svg>
   <svg class="g8" width="21" height="14"><rect x=".8" y="1" width="17" height="12" rx="2.500" fill="none" stroke="#222" stroke-width="1.500"/><path d="M3 3.500h9v7H3z" fill="#111"/><path d="M18 5h2v4h-2z" fill="#222"/></svg>
   <div class="clock text-end"><span data-fit="34">16:44</span><br><span data-fit="77">20-06-2022</span></div>
   <span class="bdg d-flex align-items-center justify-content-center">2</span>
  </div>
 </div>
</footer>
<script>
function fitLabels(){
  document.querySelectorAll('[data-fit]').forEach(function(el){
    el.style.letterSpacing='0px';
    var vertical=el.classList.contains('vt');
    var w=vertical?el.getBoundingClientRect().height:el.getBoundingClientRect().width;
    el.style.letterSpacing=((el.dataset.fit-w)/el.textContent.length).toFixed(3)+'px';
  });
}
fitLabels();
</script>
</body>
</html>
